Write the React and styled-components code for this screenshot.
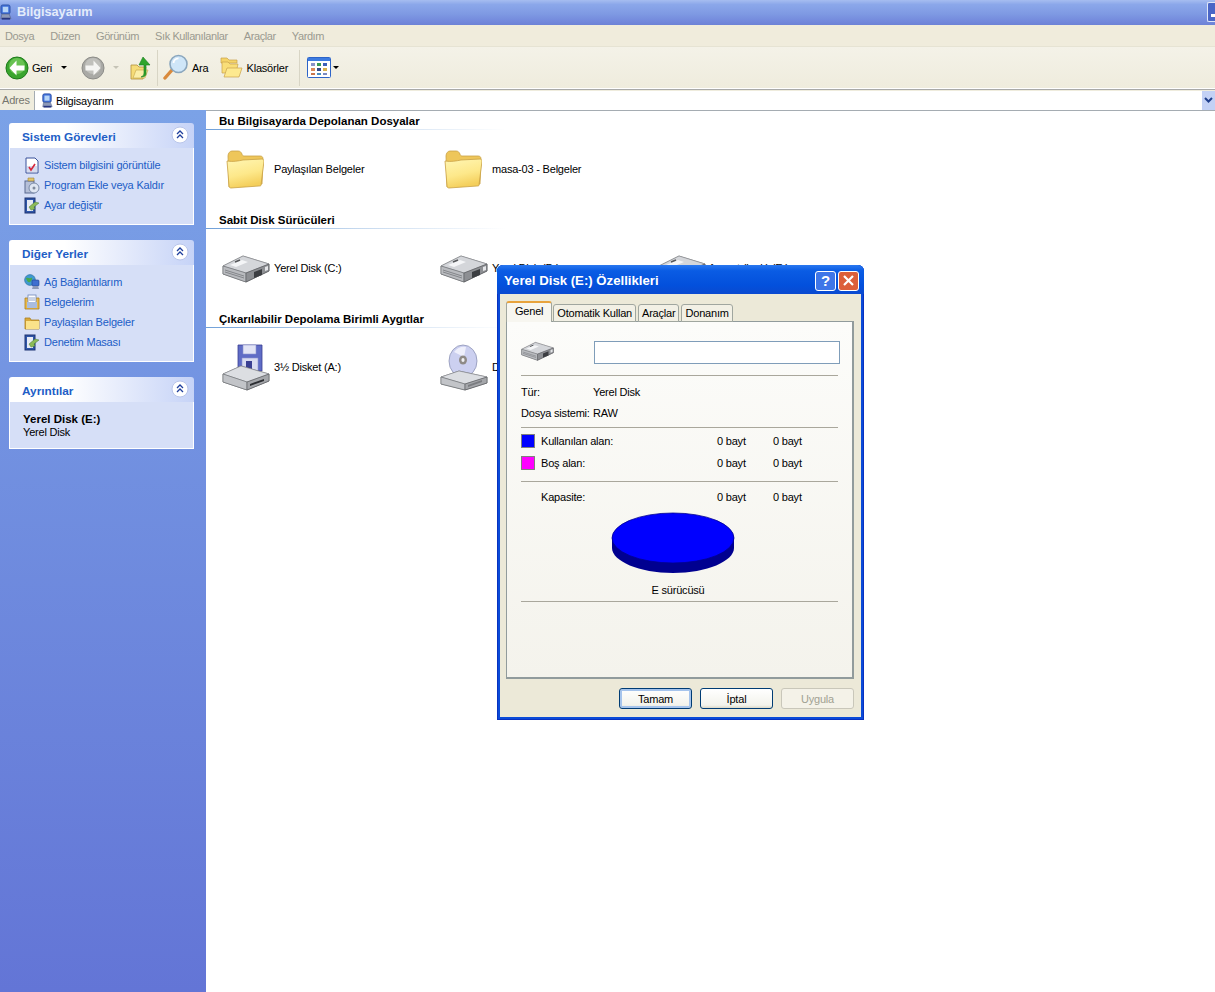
import styled, { createGlobalStyle } from "styled-components";

const GlobalStyle = createGlobalStyle`
    html, body {
        margin: 0;
        padding: 0;
        background: #fff;
    }
    body {
        font-family: "Liberation Sans", Arial, sans-serif;
        font-size: 11px;
        letter-spacing: -0.2px;
        color: #000;
    }
    * {
        box-sizing: border-box;
    }
`;

// Icones
const PcIcon = ({ size = 16 }) => (
    <svg width={size} height={size * 1.1} viewBox="0 0 16 18">
        <rect x="3" y="1" width="10" height="10" rx="2" fill="#3f6fd8" stroke="#274a9c" strokeWidth="0.8" />
        <rect x="5" y="3" width="6" height="6" fill="#b5d4f7" />
        <path d="M4 11h8l2 5H3z" fill="#8c99b8" stroke="#4a5a85" strokeWidth="0.6" />
        <rect x="4" y="15" width="9" height="2" fill="#27357f" />
    </svg>
);

const BackIcon = () => (
    <svg width="24" height="24" viewBox="0 0 24 24">
        <circle cx="12" cy="12" r="11" fill="#3aa52e" stroke="#1d7a1a" />
        <circle cx="12" cy="10" r="8" fill="#7ccf63" opacity="0.7" />
        <path d="M11.5 4.5L4.5 12l7 7.5v-5h8v-5h-8z" fill="#fff" />
    </svg>
);

const ForwardIcon = () => (
    <svg width="24" height="24" viewBox="0 0 24 24">
        <circle cx="12" cy="12" r="11" fill="#a9a9a5" stroke="#8c8c88" />
        <circle cx="12" cy="10" r="8" fill="#c6c6c2" opacity="0.8" />
        <path d="M12.5 4.5l7 7.5-7 7.5v-5h-8v-5h8z" fill="#f5f5f3" />
    </svg>
);

const UpIcon = () => (
    <svg width="22" height="24" viewBox="0 0 22 24">
        <path d="M1 9h6l2 2h7l-3 12H1z" fill="#f6dc78" stroke="#b3903a" strokeWidth="0.8" />
        <path d="M3 22l3-8h12l-3 8z" fill="#fbeea8" stroke="#c4a347" strokeWidth="0.6" />
        <path d="M13 1l7 8h-4v9c0 2-2 3-5 3 2-1 3-2 3-4V9H9z" fill="#2fa52c" stroke="#1a7a1e" strokeWidth="0.6" />
    </svg>
);

const SearchIcon = () => (
    <svg width="26" height="27" viewBox="0 0 26 27">
        <path d="M9 16L2 24" stroke="#d98a3c" strokeWidth="3.4" strokeLinecap="round" />
        <circle cx="15.5" cy="10" r="8.5" fill="#cfe6f8" stroke="#8aa6bd" strokeWidth="1.6" />
        <path d="M10.5 9a5 5 0 0 1 5-4.6" stroke="#fff" strokeWidth="1.8" fill="none" />
    </svg>
);

const FoldersIcon = () => (
    <svg width="23" height="23" viewBox="0 0 23 23">
        <path d="M1 2h6l2 2h8v3H1z" fill="#f5d468" stroke="#c8a24c" strokeWidth="0.7" />
        <path d="M2 6h6l2 2h8l-2 9H2z" fill="#f9de78" stroke="#c8a24c" strokeWidth="0.7" />
        <path d="M4 21l3-9h15l-3 9z" fill="#fde98f" stroke="#c8a24c" strokeWidth="0.7" />
    </svg>
);

const ViewsIcon = () => (
    <svg width="24" height="21" viewBox="0 0 24 21">
        <rect x="0.5" y="0.5" width="23" height="20" rx="1" fill="#fff" stroke="#2d64c8" />
        <rect x="1" y="1" width="22" height="3" fill="#3d7be0" />
        <rect x="4" y="6" width="4" height="3" fill="#8a92c8" />
        <rect x="10" y="6" width="4" height="3" fill="#3a9a56" />
        <rect x="16" y="6" width="4" height="3" fill="#3b5fb8" />
        <rect x="4" y="11" width="4" height="3" fill="#d88a5c" />
        <rect x="10" y="11" width="4" height="3" fill="#364a86" />
        <rect x="16" y="11" width="4" height="3" fill="#d8b04c" />
        <rect x="4" y="16" width="4" height="2" fill="#c9764c" />
        <rect x="10" y="16" width="4" height="2" fill="#4a8fc0" />
        <rect x="16" y="16" width="4" height="2" fill="#7a8ac0" />
    </svg>
);

const DropArrow = styled.span`
    display: inline-block;
    width: 0;
    height: 0;
    border-left: 3px solid transparent;
    border-right: 3px solid transparent;
    border-top: 3px solid ${(props) => (props.$disabled ? "#c5c3b6" : "#000")};
`;

const BigFolderIcon = () => (
    <svg width="38" height="40" viewBox="0 0 38 40">
        <defs>
            <linearGradient id="folderFront" x1="0" y1="0" x2="0.3" y2="1">
                <stop offset="0" stopColor="#fff6b4" />
                <stop offset="0.6" stopColor="#fde88a" />
                <stop offset="1" stopColor="#f4cf5c" />
            </linearGradient>
        </defs>
        <path d="M2 7c0-3 2-5 4-5h6c2 0 3 1 4 3 0 1 1 2 2 2h16c2 0 3 1 3 3l-1 25-33 3z" fill="#eec65a" stroke="#c9a145" strokeWidth="0.8" />
        <path d="M1 12c6 1 11 0 16-1l19-1c1 0 2 1 2 2l-3 24c0 1-1 1-2 1L5 39c-1 0-2-1-2-2z" fill="url(#folderFront)" stroke="#c9a145" strokeWidth="0.8" />
    </svg>
);

const DriveIcon = ({ width = 48, height = 29 }) => (
    <svg width={width} height={height} viewBox="0 0 48 29">
        <path d="M1 12L21 2l26 8v7L24 28 1 20z" fill="#77797c" stroke="#55575a" strokeWidth="0.6" />
        <path d="M1 12L21 2l26 8-23 9z" fill="#d4d6da" stroke="#8d8f93" strokeWidth="0.6" />
        <path d="M8 11l12-5 6 2-12 5z" fill="#f4f5f7" />
        <path d="M13 8l5-2" stroke="#55575a" strokeWidth="1.4" />
        <path d="M1 12l23 7v9L1 20z" fill="#b9bbbf" stroke="#6c6e72" strokeWidth="0.6" />
        <path d="M3 16l19 6M3 18l19 6" stroke="#6c6e72" strokeWidth="0.7" />
        <path d="M24 19l23-9v7L24 28z" fill="#8d8f93" stroke="#55575a" strokeWidth="0.6" />
        <path d="M32 18l8-3v6l-8 3z" fill="#3c3e42" />
        <path d="M43 13l3-1v4l-3 1z" fill="#e4e5e8" />
    </svg>
);

const FloppyDriveIcon = () => (
    <svg width="48" height="47" viewBox="0 0 48 47">
        <path d="M16 1h24v26H16z" fill="#5f6cc6" stroke="#3a3f92" strokeWidth="0.8" />
        <path d="M21 1h13v9H21z" fill="#e2e4f5" stroke="#8d93cf" strokeWidth="0.6" />
        <path d="M20 14h16v13H20z" fill="#d9dcf1" stroke="#8d93cf" strokeWidth="0.6" />
        <rect x="24" y="17" width="6" height="10" fill="#3a3f92" />
        <path d="M1 30l18-8 28 8v7L25 46 1 38z" fill="#77797c" stroke="#55575a" strokeWidth="0.6" />
        <path d="M1 30l18-8 28 8-22 8z" fill="#dcdee2" stroke="#8d8f93" strokeWidth="0.6" />
        <path d="M1 30l24 8v8L1 38z" fill="#c2c4c8" stroke="#6c6e72" strokeWidth="0.6" />
        <path d="M25 38l22-8v7L25 46z" fill="#a4a6aa" stroke="#55575a" strokeWidth="0.6" />
        <path d="M28 40l14-5v2l-14 5z" fill="#2c2e32" />
    </svg>
);

const CdDriveIcon = () => (
    <svg width="48" height="47" viewBox="0 0 48 47">
        <ellipse cx="23" cy="17" rx="14" ry="16" fill="#ccd0f0" stroke="#8d93b5" strokeWidth="0.8" />
        <path d="M14 8a14 16 0 0 1 12-5l-2 10z" fill="#eeeffb" />
        <ellipse cx="23" cy="16" rx="4" ry="4.5" fill="#8e8a86" />
        <ellipse cx="23" cy="16" rx="1.6" ry="1.9" fill="#f0f0f4" />
        <path d="M1 33l18-6 28 6v6L25 46 1 40z" fill="#77797c" stroke="#55575a" strokeWidth="0.6" />
        <path d="M1 33l18-6 28 6-22 7z" fill="#dcdee2" stroke="#8d8f93" strokeWidth="0.6" />
        <path d="M1 33l24 7v6L1 40z" fill="#c2c4c8" stroke="#6c6e72" strokeWidth="0.6" />
        <path d="M25 40l22-7v6L25 46z" fill="#a4a6aa" stroke="#55575a" strokeWidth="0.6" />
        <path d="M28 41l14-5v2l-14 5z" fill="#7b7d81" />
    </svg>
);

const ChevronsIcon = () => (
    <svg width="18" height="18" viewBox="0 0 18 18">
        <circle cx="9" cy="9" r="8" fill="#fff" stroke="#b9c5ea" />
        <path d="M6 8l3-3 3 3M6 12l3-3 3 3" stroke="#1f3f9c" strokeWidth="1.3" fill="none" />
    </svg>
);

const NoteIcon = () => (
    <svg width="16" height="17" viewBox="0 0 16 17">
        <path d="M2 1h9l3 3v12H2z" fill="#fff" stroke="#39509a" />
        <rect x="3" y="9" width="10" height="6" fill="#d7dcef" />
        <path d="M5 10l2 3 4-6" stroke="#d5263a" strokeWidth="1.6" fill="none" />
    </svg>
);

const InstallIcon = () => (
    <svg width="16" height="17" viewBox="0 0 16 17">
        <rect x="1" y="4" width="9" height="12" fill="#b6c0d8" stroke="#5a6a90" />
        <circle cx="10" cy="11" r="5" fill="#dfe6f2" stroke="#7a8aa8" />
        <circle cx="10" cy="11" r="1.5" fill="#7f8a9c" />
        <path d="M4 1h6v3H4z" fill="#e3c66a" stroke="#9c8238" strokeWidth="0.6" />
    </svg>
);

const PanelIcon = () => (
    <svg width="16" height="17" viewBox="0 0 16 17">
        <rect x="1" y="1" width="10" height="15" fill="#2f56a8" stroke="#1e3572" />
        <rect x="3" y="3" width="6" height="11" fill="#e7ebf4" />
        <path d="M5 10l6-5 4 1-5 4 1 2-4 1z" fill="#8cbb57" stroke="#4a7a33" strokeWidth="0.5" />
    </svg>
);

const NetworkIcon = () => (
    <svg width="16" height="17" viewBox="0 0 16 17">
        <circle cx="6" cy="6" r="5.4" fill="#3f9ad0" stroke="#2a6a9c" strokeWidth="0.6" />
        <path d="M2 4c2-1 3 1 5 0s1 3-1 4-3-1-4-4z" fill="#4aa84a" />
        <rect x="8" y="6" width="7" height="6" rx="1" fill="#3e6fd0" stroke="#1e3f8c" strokeWidth="0.6" />
        <path d="M9 12h5l1 3H8z" fill="#8c99b8" />
    </svg>
);

const DocsIcon = () => (
    <svg width="16" height="17" viewBox="0 0 16 17">
        <path d="M1 4h14v11H1z" fill="#e9b949" stroke="#a97f22" strokeWidth="0.8" />
        <rect x="4" y="1" width="8" height="9" fill="#fff" stroke="#6f86b8" strokeWidth="0.8" />
        <path d="M5 4h6M5 6h6" stroke="#7a8fc0" strokeWidth="0.8" />
        <rect x="3" y="8" width="10" height="6" fill="#a9bce0" />
    </svg>
);

const SmallFolderIcon = () => (
    <svg width="16" height="17" viewBox="0 0 16 17">
        <path d="M1 4h5l1 2h8v9H1z" fill="#d9a93a" stroke="#a97f22" strokeWidth="0.8" />
        <path d="M2 7h13v8H2z" fill="#fbe28a" />
    </svg>
);

const PieChart = () => (
    <svg width="124" height="62" viewBox="0 0 124 62">
        <path d="M1 26v10c0 13 27 25 61 25s61-12 61-25V26z" fill="#000090" />
        <ellipse cx="62" cy="26" rx="61" ry="25" fill="#0000ff" stroke="#000090" strokeWidth="0.8" />
    </svg>
);

// Dados do painel lateral e das secoes
const panels = [
    {
        title: "Sistem Görevleri",
        links: [
            { icon: <NoteIcon />, label: "Sistem bilgisini görüntüle" },
            { icon: <InstallIcon />, label: "Program Ekle veya Kaldır" },
            { icon: <PanelIcon />, label: "Ayar değiştir" },
        ],
    },
    {
        title: "Diğer Yerler",
        links: [
            { icon: <NetworkIcon />, label: "Ağ Bağlantılarım" },
            { icon: <DocsIcon />, label: "Belgelerim" },
            { icon: <SmallFolderIcon />, label: "Paylaşılan Belgeler" },
            { icon: <PanelIcon />, label: "Denetim Masası" },
        ],
    },
];

const sections = [
    {
        title: "Bu Bilgisayarda Depolanan Dosyalar",
        items: [
            { icon: <BigFolderIcon />, label: "Paylaşılan Belgeler", folder: true },
            { icon: <BigFolderIcon />, label: "masa-03 - Belgeler", folder: true },
        ],
    },
    {
        title: "Sabit Disk Sürücüleri",
        items: [
            { icon: <DriveIcon />, label: "Yerel Disk (C:)" },
            { icon: <DriveIcon />, label: "Yerel Disk (D:)" },
            { icon: <DriveIcon />, label: "format (hızlı) (E:)" },
        ],
    },
    {
        title: "Çıkarılabilir Depolama Birimli Aygıtlar",
        items: [
            { icon: <FloppyDriveIcon />, label: "3½ Disket (A:)" },
            { icon: <CdDriveIcon />, label: "DVD Sürücüsü (F:)" },
        ],
    },
];

const usageRows = [
    { color: "#0000ff", label: "Kullanılan alan:", top: 6 },
    { color: "#ff00ff", label: "Boş alan:", top: 8 },
];

const App = () => {
    return (
        <>
            <GlobalStyle />
            <Window>
                <TitleBar>
                    <TitleIcon><PcIcon size={15} /></TitleIcon>
                    <TitleText>Bilgisayarım</TitleText>
                    <MinimizeEdge />
                </TitleBar>
                <MenuBar>
                    {["Dosya", "Düzen", "Görünüm", "Sık Kullanılanlar", "Araçlar", "Yardım"].map((item) => (
                        <MenuItem key={item}>{item}</MenuItem>
                    ))}
                </MenuBar>
                <Toolbar>
                    <ToolGroup>
                        <BackIcon />
                        <ToolLabel $gap={3}>Geri</ToolLabel>
                        <ArrowSlot $width={29} $pad={9}><DropArrow /></ArrowSlot>
                        <ForwardIcon />
                        <ArrowSlot $width={25} $pad={8}><DropArrow $disabled /></ArrowSlot>
                        <UpIcon />
                    </ToolGroup>
                    <ToolDivider $left={5} $right={5} />
                    <ToolGroup>
                        <SearchIcon />
                        <ToolLabel $gap={3}>Ara</ToolLabel>
                        <ToolSpacer />
                        <FoldersIcon />
                        <ToolLabel $gap={4}>Klasörler</ToolLabel>
                    </ToolGroup>
                    <ToolDivider $left={11} $right={7} />
                    <ToolGroup>
                        <ViewsIcon />
                        <ArrowSlot $width={10} $pad={2}><DropArrow /></ArrowSlot>
                    </ToolGroup>
                </Toolbar>
                <AddressBar>
                    <AddressLabel>Adres</AddressLabel>
                    <AddressField>
                        <PcIcon size={14} />
                        <span>Bilgisayarım</span>
                        <AddressDrop>
                            <svg width="9" height="7" viewBox="0 0 9 7">
                                <path d="M1 1l3.5 3.5L8 1" stroke="#1f3f8c" strokeWidth="2" fill="none" />
                            </svg>
                        </AddressDrop>
                    </AddressField>
                </AddressBar>
                <Body>
                    <Sidebar>
                        {panels.map((panel) => (
                            <Panel key={panel.title}>
                                <PanelHeader>
                                    <PanelTitle>{panel.title}</PanelTitle>
                                    <ChevronsIcon />
                                </PanelHeader>
                                <PanelBody>
                                    {panel.links.map((link) => (
                                        <TaskLink key={link.label}>
                                            <TaskIcon>{link.icon}</TaskIcon>
                                            {link.label}
                                        </TaskLink>
                                    ))}
                                </PanelBody>
                            </Panel>
                        ))}
                        <Panel>
                            <PanelHeader>
                                <PanelTitle>Ayrıntılar</PanelTitle>
                                <ChevronsIcon />
                            </PanelHeader>
                            <DetailsBody>
                                <DetailsName>Yerel Disk (E:)</DetailsName>
                                <span>Yerel Disk</span>
                            </DetailsBody>
                        </Panel>
                    </Sidebar>
                    <Content>
                        {sections.map((section) => (
                            <Section key={section.title}>
                                <SectionTitle>{section.title}</SectionTitle>
                                <SectionRule />
                                <ItemGrid>
                                    {section.items.map((item) => (
                                        <Item key={item.label}>
                                            <ItemIcon $folder={item.folder}>{item.icon}</ItemIcon>
                                            {item.label}
                                        </Item>
                                    ))}
                                </ItemGrid>
                            </Section>
                        ))}
                    </Content>
                </Body>
                <Dialog>
                    <DialogTitle>
                        <DialogTitleText>Yerel Disk (E:) Özellikleri</DialogTitleText>
                        <WindowButton $color="#3f76e8">?</WindowButton>
                        <WindowButton $color="#dc5f3a">
                            <svg width="11" height="11" viewBox="0 0 11 11">
                                <path d="M1 1l9 9M10 1l-9 9" stroke="#fff" strokeWidth="2.2" />
                            </svg>
                        </WindowButton>
                    </DialogTitle>
                    <DialogBody>
                        <Tabs>
                            <Tab $active>Genel</Tab>
                            <Tab>Otomatik Kullan</Tab>
                            <Tab>Araçlar</Tab>
                            <Tab>Donanım</Tab>
                        </Tabs>
                        <TabPanel>
                            <NameRow>
                                <DriveIcon width={33} height={20} />
                                <NameInput />
                            </NameRow>
                            <Rule />
                            <InfoRow $top={9}><InfoLabel>Tür:</InfoLabel>Yerel Disk</InfoRow>
                            <InfoRow $top={8}><InfoLabel>Dosya sistemi:</InfoLabel>RAW</InfoRow>
                            <Rule $top={8} />
                            {usageRows.map((row) => (
                                <UsageRow key={row.label} $top={row.top}>
                                    <Swatch $color={row.color} />
                                    <UsageLabel>{row.label}</UsageLabel>
                                    <UsageValue>0 bayt</UsageValue>
                                    <UsageValue>0 bayt</UsageValue>
                                </UsageRow>
                            ))}
                            <Rule $top={11} />
                            <UsageRow $top={8}>
                                <SwatchGap />
                                <UsageLabel>Kapasite:</UsageLabel>
                                <UsageValue>0 bayt</UsageValue>
                                <UsageValue>0 bayt</UsageValue>
                            </UsageRow>
                            <PieBox>
                                <PieChart />
                            </PieBox>
                            <DriveCaption>E sürücüsü</DriveCaption>
                            <Rule $top={4} />
                        </TabPanel>
                        <DialogButtons>
                            <DialogButton $default>Tamam</DialogButton>
                            <DialogButton>İptal</DialogButton>
                            <DialogButton $disabled>Uygula</DialogButton>
                        </DialogButtons>
                    </DialogBody>
                </Dialog>
            </Window>
        </>
    );
};

const Window = styled.div`
    position: relative;
    display: flex;
    flex-direction: column;
    width: 1215px;
    height: 992px;
    overflow: hidden;
`;

const TitleBar = styled.div`
    display: flex;
    align-items: center;
    gap: 4px;
    height: 25px;
    padding-bottom: 1px;
    background: linear-gradient(180deg, #a6bdf0 0%, #8ba7ea 18%, #7f9ae3 55%, #7389dc 85%, #6d82d6 100%);
    flex-shrink: 0;
`;

const TitleIcon = styled.span`
    display: inline-flex;
    margin-left: -2px;
`;

const TitleText = styled.span`
    font-size: 12.7px;
    font-weight: 700;
    letter-spacing: 0;
    color: #e4ecfb;
`;

const MinimizeEdge = styled.span`
    margin-left: auto;
    width: 8px;
    height: 20px;
    border: 1px solid #dfe7f8;
    border-right: 0;
    border-radius: 2px 0 0 2px;
    background: #4b66c6;
    position: relative;

    &::after {
        content: "";
        position: absolute;
        left: 3px;
        bottom: 4px;
        width: 4px;
        height: 3px;
        background: #fff;
    }
`;

const MenuBar = styled.div`
    display: flex;
    align-items: center;
    gap: 16px;
    height: 22px;
    padding-left: 5px;
    background: #f0ecdc;
    border-bottom: 1px solid #e6e3d3;
    flex-shrink: 0;
`;

const MenuItem = styled.span`
    color: #9a9a90;
    letter-spacing: -0.4px;
`;

const Toolbar = styled.div`
    display: flex;
    align-items: center;
    height: 41px;
    padding-left: 5px;
    background: linear-gradient(180deg, #f4f2e8 0%, #efecdd 100%);
    flex-shrink: 0;
`;

const ToolGroup = styled.div`
    display: flex;
    align-items: center;
`;

const ToolLabel = styled.span`
    margin-left: ${(props) => props.$gap}px;
    color: #000;
`;

const ToolSpacer = styled.span`
    width: 11px;
`;

const ArrowSlot = styled.span`
    display: inline-flex;
    width: ${(props) => props.$width}px;
    padding-left: ${(props) => props.$pad}px;
`;

const ToolDivider = styled.span`
    width: 1px;
    height: 36px;
    margin: 0 ${(props) => props.$right}px 0 ${(props) => props.$left}px;
    background: #d8d5c5;
`;

const AddressBar = styled.div`
    display: flex;
    align-items: stretch;
    height: 21px;
    margin-top: 1px;
    padding-top: 1px;
    background: #efecdd;
    border-top: 1px solid #a8a9a8;
    flex-shrink: 0;
`;

const AddressLabel = styled.span`
    width: 34px;
    padding: 3px 0 0 2px;
    color: #75756d;
`;

const AddressField = styled.div`
    display: flex;
    align-items: center;
    gap: 2px;
    flex: 1;
    padding-left: 5px;
    background: #fff;
    border-left: 1px solid #a5acb2;
    position: relative;
`;

const AddressDrop = styled.span`
    position: absolute;
    right: 0;
    top: 0;
    bottom: 0;
    width: 13px;
    display: flex;
    align-items: center;
    justify-content: center;
    background: #c3d1f5;
`;

const Body = styled.div`
    display: flex;
    flex: 1;
    min-height: 0;
`;

const Sidebar = styled.div`
    display: flex;
    flex-direction: column;
    gap: 15px;
    width: 206px;
    padding: 13px 12px 0 9px;
    background: linear-gradient(180deg, #7ba2e7 0%, #6375d6 100%);
    flex-shrink: 0;
`;

const Panel = styled.section`
    display: flex;
    flex-direction: column;
`;

const PanelHeader = styled.div`
    display: flex;
    align-items: center;
    justify-content: space-between;
    height: 25px;
    padding: 2px 5px 0 13px;
    background: linear-gradient(90deg, #fff 0%, #fff 30%, #c6d3f7 100%);
    border-radius: 3px 3px 0 0;

    svg {
        margin-top: -3px;
    }
`;

const PanelTitle = styled.span`
    font-size: 11.8px;
    font-weight: 700;
    letter-spacing: 0;
    color: #215dc6;
`;

const PanelBody = styled.div`
    display: flex;
    flex-direction: column;
    padding: 7px 0 9px 13px;
    background: #d6dff7;
    border: 1px solid #fff;
    border-top: 0;
`;

const TaskLink = styled.div`
    display: flex;
    align-items: center;
    gap: 4px;
    height: 20px;
    color: #215dc6;
`;

const TaskIcon = styled.span`
    display: inline-flex;
    justify-content: center;
    width: 17px;
`;

const DetailsBody = styled.div`
    display: flex;
    flex-direction: column;
    height: 47px;
    padding: 11px 0 0 13px;
    line-height: 13px;
    background: #d6dff7;
    border: 1px solid #fff;
    border-top: 0;
`;

const DetailsName = styled.span`
    font-size: 11.5px;
    font-weight: 700;
    letter-spacing: 0;
`;

const Content = styled.main`
    flex: 1;
    padding-top: 2px;
    background: #fff;
    border-top: 1px solid #a5acb2;
`;

const Section = styled.section`
    height: 99px;
`;

const SectionTitle = styled.h3`
    margin: 0;
    height: 16px;
    padding-left: 13px;
    font-size: 11.5px;
    line-height: 16px;
    font-weight: 700;
    letter-spacing: 0;
    color: #000;
`;

const SectionRule = styled.div`
    width: 300px;
    height: 1px;
    background: linear-gradient(90deg, #70a0d8 0%, #c4d8ee 50%, #fff 100%);
`;

const ItemGrid = styled.div`
    display: grid;
    grid-template-columns: repeat(3, 218px);
    align-items: center;
    height: 78px;
    padding-left: 16px;
`;

const Item = styled.div`
    display: flex;
    align-items: center;
    gap: 4px;
    white-space: nowrap;
`;

const ItemIcon = styled.span`
    display: inline-flex;
    justify-content: ${(props) => (props.$folder ? "flex-end" : "flex-start")};
    width: 48px;
    padding-right: ${(props) => (props.$folder ? "6px" : "0")};
`;

const Dialog = styled.div`
    position: absolute;
    left: 497px;
    top: 265px;
    display: flex;
    flex-direction: column;
    width: 367px;
    height: 455px;
    background: #0a4bd8;
    border-radius: 6px 6px 0 0;
    box-shadow: inset 0 0 0 1px #0831c0;
`;

const DialogTitle = styled.div`
    display: flex;
    align-items: center;
    gap: 2px;
    height: 29px;
    padding: 2px 5px 0 7px;
    background: linear-gradient(180deg, #2a78f0 0%, #0a5ce4 20%, #0350dc 70%, #0a4ad0 100%);
    border-radius: 6px 6px 0 0;
    flex-shrink: 0;
`;

const DialogTitleText = styled.span`
    flex: 1;
    font-size: 13.2px;
    font-weight: 700;
    letter-spacing: 0;
    color: #fff;
`;

const WindowButton = styled.span`
    display: inline-flex;
    align-items: center;
    justify-content: center;
    width: 21px;
    height: 20px;
    border: 1px solid #fff;
    border-radius: 3px;
    background: ${(props) => props.$color};
    font-size: 15px;
    font-weight: 700;
    color: #fff;
`;

const DialogBody = styled.div`
    display: flex;
    flex-direction: column;
    flex: 1;
    margin: 0 3px 3px 3px;
    padding: 7px 7px 0 6px;
    background: #ece9d8;
`;

const Tabs = styled.div`
    display: flex;
    align-items: flex-end;
    height: 21px;
    margin-bottom: -1px;
    position: relative;
    z-index: 1;
`;

const Tab = styled.span`
    display: flex;
    align-items: center;
    justify-content: center;
    height: ${(props) => (props.$active ? "21px" : "18px")};
    padding: 0 ${(props) => (props.$active ? "8px" : "3px")} ${(props) => (props.$active ? "4px" : "0")};
    margin-right: ${(props) => (props.$active ? "1px" : "2px")};
    background: ${(props) => (props.$active ? "#f7f6f0" : "#f2f0e5")};
    border: 1px solid #a0a69f;
    border-top: ${(props) => (props.$active ? "2px solid #e8a33c" : "1px solid #a0a69f")};
    border-bottom: ${(props) => (props.$active ? "0" : "1px solid #a0a69f")};
    border-radius: 3px 3px 0 0;
    white-space: nowrap;
`;

const TabPanel = styled.div`
    display: flex;
    flex-direction: column;
    height: 358px;
    padding: 19px 14px 0 14px;
    background: linear-gradient(180deg, #fcfcfa 0%, #f4f3ec 100%);
    border: 1px solid #919b9c;
    border-right-width: 2px;
    border-bottom-width: 2px;
`;

const NameRow = styled.div`
    display: flex;
    justify-content: space-between;
    align-items: flex-start;
    width: 319px;
`;

const NameInput = styled.span`
    display: block;
    width: 246px;
    height: 23px;
    background: #fff;
    border: 1px solid #7f9db9;
`;

const Rule = styled.div`
    width: 317px;
    height: 1px;
    margin-top: ${(props) => props.$top ?? 11}px;
    background: #a9a79c;
    flex-shrink: 0;
`;

const InfoRow = styled.div`
    display: flex;
    align-items: center;
    height: 13px;
    margin-top: ${(props) => props.$top}px;
    white-space: nowrap;
`;

const InfoLabel = styled.span`
    width: 72px;
    flex-shrink: 0;
`;

const UsageRow = styled.div`
    display: flex;
    align-items: center;
    height: 14px;
    margin-top: ${(props) => props.$top}px;
`;

const Swatch = styled.span`
    width: 14px;
    height: 14px;
    margin-right: 6px;
    background: ${(props) => props.$color};
    border: 1px solid #80807c;
`;

const SwatchGap = styled.span`
    width: 20px;
`;

const UsageLabel = styled.span`
    width: 176px;
`;

const UsageValue = styled.span`
    width: 56px;
`;

const PieBox = styled.div`
    display: flex;
    margin-top: 8px;
    padding-left: 90px;
`;

const DriveCaption = styled.div`
    width: 314px;
    margin-top: 10px;
    text-align: center;
    line-height: 13px;
`;

const DialogButtons = styled.div`
    display: flex;
    justify-content: flex-end;
    gap: 8px;
    margin-top: 9px;
`;

const DialogButton = styled.span`
    display: flex;
    align-items: center;
    justify-content: center;
    width: 73px;
    height: 21px;
    color: ${(props) => (props.$disabled ? "#a1a192" : "#000")};
    background: ${(props) => (props.$disabled ? "#f4f2e8" : "linear-gradient(180deg, #ffffff 0%, #f3f3ec 85%, #dcd8c8 100%)")};
    border: 1px solid ${(props) => (props.$disabled ? "#c9c7ba" : "#003c74")};
    border-radius: 3px;
    box-shadow: ${(props) => (props.$default ? "inset 0 0 0 2px #a6c4ec" : "none")};
`;

export default App;
